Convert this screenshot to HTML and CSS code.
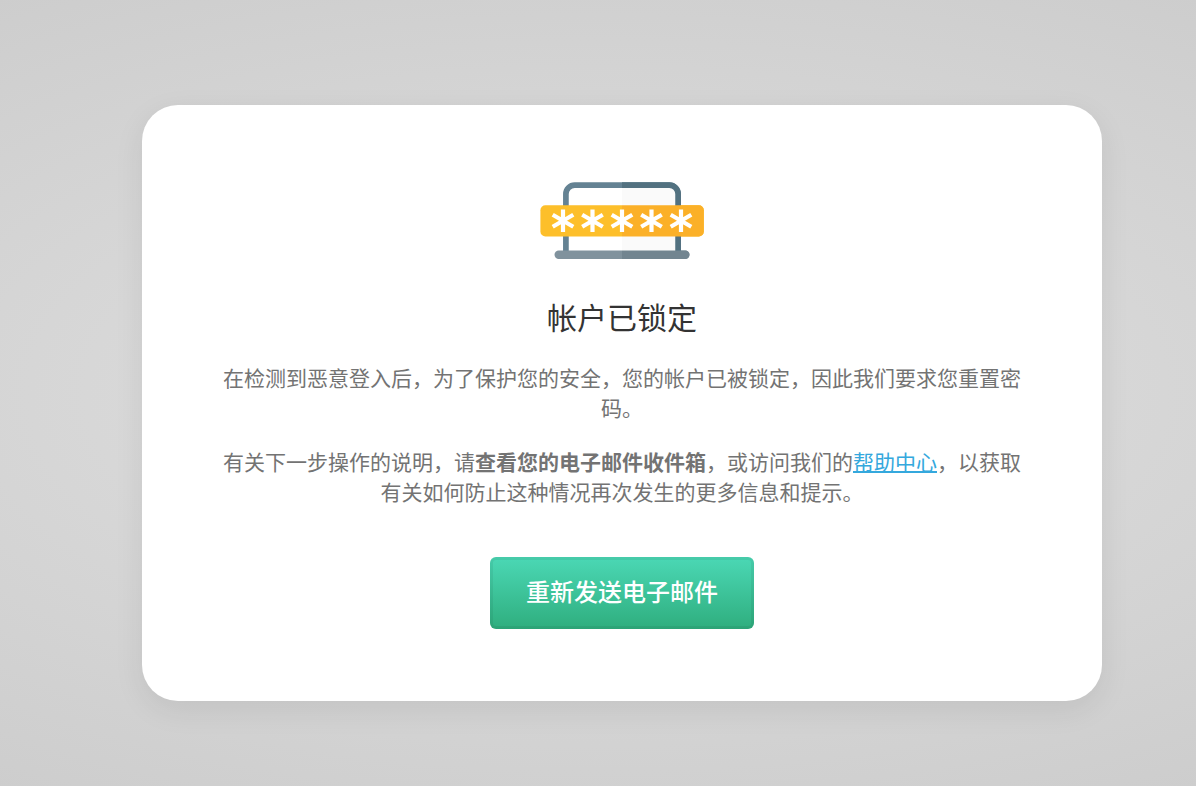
FILE: index.html
```html
<!DOCTYPE html>
<html lang="zh-CN">

<head>
    <meta charset="UTF-8">
    <meta name="viewport" content="width=device-width, initial-scale=1.0">
    <title>帐户已锁定</title>
    <link rel="stylesheet" href="styles.css">
</head>

<body>
    <main class="card">
        <svg class="lock-icon" viewBox="0 0 164 87" aria-hidden="true">
            <defs>
                <clipPath id="right-half">
                    <rect x="82" y="0" width="82" height="87" />
                </clipPath>
                <path id="star" d="M0-11.3V11.3M-10.3-6L10.3 6M-10.3 6L10.3-6" />
            </defs>
            <!-- left side of the laptop -->
            <path class="frame" d="M25.9 75V17a8.8 8.8 0 0 1 8.8-8.8H129.3a8.8 8.8 0 0 1 8.8 8.8V75" />
            <rect class="base" x="14.5" y="73.5" width="135" height="8.5" rx="4.2" />
            <rect class="bar" x="0.4" y="28.3" width="163.4" height="31.2" rx="5" />
            <!-- darker right side -->
            <g class="dark" clip-path="url(#right-half)">
                <path class="frame" d="M25.9 75V17a8.8 8.8 0 0 1 8.8-8.8H129.3a8.8 8.8 0 0 1 8.8 8.8V75" />
                <rect class="base" x="14.5" y="73.5" width="135" height="8.5" rx="4.2" />
                <rect class="bar" x="0.4" y="28.3" width="163.4" height="31.2" rx="5" />
            </g>
            <g class="stars">
                <use href="#star" x="23" y="43.8" />
                <use href="#star" x="52.5" y="43.8" />
                <use href="#star" x="82" y="43.8" />
                <use href="#star" x="111.5" y="43.8" />
                <use href="#star" x="141" y="43.8" />
            </g>
        </svg>
        <h1>帐户已锁定</h1>
        <p>在检测到恶意登入后，为了保护您的安全，您的帐户已被锁定，因此我们要求您重置密码。</p>
        <p>有关下一步操作的说明，请<strong>查看您的电子邮件收件箱</strong>，或访问我们的<a href="#">帮助中心</a>，以获取有关如何防止这种情况再次发生的更多信息和提示。</p>
        <button type="button" class="resend">重新发送电子邮件</button>
    </main>
</body>

</html>
```
FILE: styles.css
```css
* {
    box-sizing: border-box;
}

body {
    margin: 0;
    min-height: 100vh;
    padding: 20px 0 0 48px;
    display: flex;
    align-items: center;
    justify-content: center;
    background: radial-gradient(95% 64% at center, #e0e0e0, #cccccc);
    font-family: "Liberation Sans", "Noto Sans CJK SC", sans-serif;
    color: #737373;
}

.card {
    width: 100%;
    max-width: 960px;
    padding: 72px;
    display: flex;
    flex-direction: column;
    align-items: center;
    background: #ffffff;
    border-radius: 36px;
    box-shadow: 0 9px 30px rgba(0, 0, 0, 0.08);
    text-align: center;
}

.lock-icon {
    width: 164px;
    height: 87px;
}

.frame {
    fill: #ffffff;
    stroke: #648293;
    stroke-width: 5.7;
}

.base {
    fill: #80929d;
}

.bar {
    fill: #fdbf2a;
}

.dark .frame {
    fill: #fafafa;
    stroke: #527180;
}

.dark .base {
    fill: #728590;
}

.dark .bar {
    fill: #fbb028;
}

.stars {
    fill: none;
    stroke: #ffffff;
    stroke-width: 4.2;
}

h1 {
    margin: 37px 0 27px;
    font-size: 30px;
    line-height: 36px;
    font-weight: 400;
    color: #333333;
}

p {
    margin: 0 0 24px;
    font-size: 21px;
    line-height: 30px;
}

strong {
    font-weight: 700;
}

a {
    color: #34a8dd;
    text-decoration-thickness: 2px;
}

.resend {
    margin-top: 25px;
    padding: 0 36px;
    border: 0;
    border-radius: 6px;
    background: linear-gradient(#4bd8b5, #2fae7e);
    box-shadow: inset 0 0 0 3px rgba(0, 0, 0, 0.06);
    font-family: inherit;
    font-size: 24px;
    line-height: 72px;
    font-weight: 500;
    color: #ffffff;
    cursor: pointer;
}
```
